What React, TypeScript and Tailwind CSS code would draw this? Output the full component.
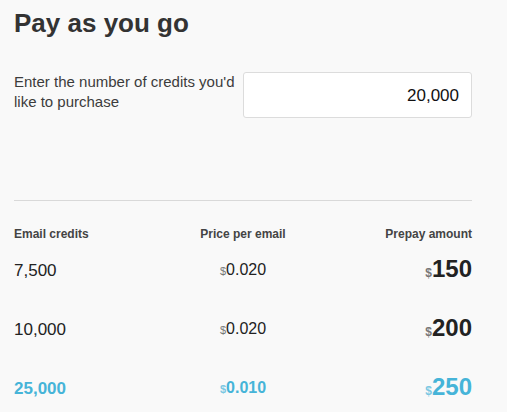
import React from "react";

type Row = { credits: string; price: string; amount: string; featured?: boolean };

const ROWS: Row[] = [
  { credits: "7,500", price: "0.020", amount: "150" },
  { credits: "10,000", price: "0.020", amount: "200" },
  { credits: "25,000", price: "0.010", amount: "250", featured: true },
];

export default function App() {
  return (
    <div className="min-h-[412px] w-[507px] bg-[#f9f9f9] font-['Liberation_Sans',Arial,sans-serif] text-[#333]">
      <div className="ml-[14px] w-[458px] pt-2">
        <h1 className="text-[26px] font-bold leading-[30px] text-[#333]">Pay as you go</h1>

        {/* Saisie du nombre de crédits */}
        <div className="mt-[34px] flex">
          <label htmlFor="credits" className="w-[229px] pr-2 text-[15px] leading-[20px] text-[#3c3c3c]">
            Enter the number of credits you'd like to purchase
          </label>
          <input
            id="credits"
            type="text"
            defaultValue="20,000"
            className="h-[46px] w-[229px] rounded-[3px] border border-[#dcdcdc] bg-white px-3 pt-px text-right text-[17px] text-[#111] outline-none"
          />
        </div>

        <div className="mt-[82px] h-px bg-[#d9d9d9]" />

        {/* En-têtes */}
        <div className="mt-[25px] grid grid-cols-3 text-[12px] font-bold leading-[16px] text-[#444]">
          <span>Email credits</span>
          <span className="text-center">Price per email</span>
          <span className="text-right">Prepay amount</span>
        </div>

        <div className="-mt-px">
          {ROWS.map((r) => (
            <div
              key={r.credits}
              className={`grid h-[59px] grid-cols-3 items-center leading-[28px] ${
                r.featured ? "font-bold text-[#46b4d8]" : "text-[#222]"
              }`}
            >
              <span className="text-[17px]">{r.credits}</span>
              <span className="text-center text-[16px]">
                <span className={`text-[11px] ${r.featured ? "text-[#7cc8e2]" : "text-[#777]"}`}>$</span>
                {r.price}
              </span>
              <span className="text-right">
                <span className={`text-[12px] font-bold ${r.featured ? "text-[#7cc8e2]" : "text-[#777]"}`}>$</span>
                <span className="text-[24px] font-bold">{r.amount}</span>
              </span>
            </div>
          ))}
        </div>
      </div>
    </div>
  );
}
